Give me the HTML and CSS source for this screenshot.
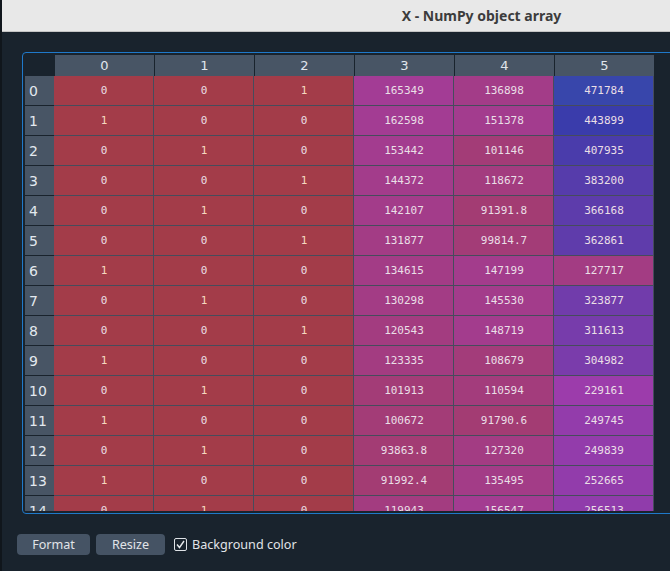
FILE: index.html
```html
<!DOCTYPE html>
<html>
<head>
<meta charset="utf-8">
<title>X - NumPy object array</title>
<link rel="stylesheet" href="styles.css">
</head>
<body>
<div class="desk">
  <div class="edge"></div>
  <div class="window">
    <div class="titlebar"><span class="title">X - NumPy object array</span></div>
    <div class="content">
      <div class="frame">
        <div class="viewport">
          <div class="grid">
            <div class="corner"></div>
            <div class="ch">0</div><div class="ch">1</div><div class="ch">2</div><div class="ch">3</div><div class="ch">4</div><div class="ch">5</div>

            <div class="rh">0</div><div class="c">0</div><div class="c">0</div><div class="c one">1</div><div class="c" style="--v:165349">165349</div><div class="c" style="--v:136898">136898</div><div class="c" style="--v:471784">471784</div>
            <div class="rh">1</div><div class="c one">1</div><div class="c">0</div><div class="c">0</div><div class="c" style="--v:162598">162598</div><div class="c" style="--v:151378">151378</div><div class="c" style="--v:443899">443899</div>
            <div class="rh">2</div><div class="c">0</div><div class="c one">1</div><div class="c">0</div><div class="c" style="--v:153442">153442</div><div class="c" style="--v:101146">101146</div><div class="c" style="--v:407935">407935</div>
            <div class="rh">3</div><div class="c">0</div><div class="c">0</div><div class="c one">1</div><div class="c" style="--v:144372">144372</div><div class="c" style="--v:118672">118672</div><div class="c" style="--v:383200">383200</div>
            <div class="rh">4</div><div class="c">0</div><div class="c one">1</div><div class="c">0</div><div class="c" style="--v:142107">142107</div><div class="c" style="--v:91391.8">91391.8</div><div class="c" style="--v:366168">366168</div>
            <div class="rh">5</div><div class="c">0</div><div class="c">0</div><div class="c one">1</div><div class="c" style="--v:131877">131877</div><div class="c" style="--v:99814.7">99814.7</div><div class="c" style="--v:362861">362861</div>
            <div class="rh">6</div><div class="c one">1</div><div class="c">0</div><div class="c">0</div><div class="c" style="--v:134615">134615</div><div class="c" style="--v:147199">147199</div><div class="c" style="--v:127717">127717</div>
            <div class="rh">7</div><div class="c">0</div><div class="c one">1</div><div class="c">0</div><div class="c" style="--v:130298">130298</div><div class="c" style="--v:145530">145530</div><div class="c" style="--v:323877">323877</div>
            <div class="rh">8</div><div class="c">0</div><div class="c">0</div><div class="c one">1</div><div class="c" style="--v:120543">120543</div><div class="c" style="--v:148719">148719</div><div class="c" style="--v:311613">311613</div>
            <div class="rh">9</div><div class="c one">1</div><div class="c">0</div><div class="c">0</div><div class="c" style="--v:123335">123335</div><div class="c" style="--v:108679">108679</div><div class="c" style="--v:304982">304982</div>
            <div class="rh">10</div><div class="c">0</div><div class="c one">1</div><div class="c">0</div><div class="c" style="--v:101913">101913</div><div class="c" style="--v:110594">110594</div><div class="c" style="--v:229161">229161</div>
            <div class="rh">11</div><div class="c one">1</div><div class="c">0</div><div class="c">0</div><div class="c" style="--v:100672">100672</div><div class="c" style="--v:91790.6">91790.6</div><div class="c" style="--v:249745">249745</div>
            <div class="rh">12</div><div class="c">0</div><div class="c one">1</div><div class="c">0</div><div class="c" style="--v:93863.8">93863.8</div><div class="c" style="--v:127320">127320</div><div class="c" style="--v:249839">249839</div>
            <div class="rh">13</div><div class="c one">1</div><div class="c">0</div><div class="c">0</div><div class="c" style="--v:91992.4">91992.4</div><div class="c" style="--v:135495">135495</div><div class="c" style="--v:252665">252665</div>
            <div class="rh">14</div><div class="c">0</div><div class="c one">1</div><div class="c">0</div><div class="c" style="--v:119943">119943</div><div class="c" style="--v:156547">156547</div><div class="c" style="--v:256513">256513</div>
          </div>
        </div>
      </div>
      <div class="actions">
        <button class="btn btn-format">Format</button>
        <button class="btn btn-resize">Resize</button>
        <label class="check">
          <span class="box"><svg width="11" height="11" viewBox="0 0 11 11"><path d="M2 5.5 L4.5 8.5 L9 2" fill="none" stroke="#e6e9ec" stroke-width="1.4"/></svg></span>
          <span>Background color</span>
        </label>
      </div>
    </div>
  </div>
</div>
</body>
</html>
```
FILE: styles.css
```css
html, body {
  margin: 0;
  padding: 0;
  background: #19232d;
  overflow: hidden;
  width: 670px;
  height: 571px;
}
.desk {
  display: flex;
  height: 571px;
}
.edge {
  flex: 0 0 2px;
  background: #10161c;
}
.window {
  flex: 0 0 959px;
  display: flex;
  flex-direction: column;
  background: #19232d;
}
.titlebar {
  height: 31px;
  background: #e8e8e8;
  border-bottom: 1px solid #c4c4c4;
  display: flex;
  align-items: center;
  justify-content: center;
}
.title {
  font-family: "Noto Sans", "DejaVu Sans", sans-serif;
  font-weight: 700;
  font-size: 14px;
  color: #3c3c3c;
}
.content {
  padding: 20px 0 0 15px;
}
.frame {
  margin-left: 5px;
  border: 1px solid #1f79ca;
  border-radius: 4px;
  padding: 2px;
}
.viewport {
  height: 456px;
  overflow: hidden;
}
.grid {
  display: grid;
  grid-template-columns: 29px repeat(6, 100px);
  grid-template-rows: 21px;
  grid-auto-rows: 30px;
}
.grid > div {
  box-sizing: border-box;
}
.corner {
  background: #19232d;
}
.ch {
  background: #485565;
  border-left: 1px solid #19232d;
  color: #e0e6ec;
  font-family: "DejaVu Sans", sans-serif;
  font-size: 13px;
  display: flex;
  align-items: center;
  justify-content: center;
}
.rh {
  background: #485565;
  border-bottom: 1px solid #19232d;
  color: #e3e9ef;
  font-family: "DejaVu Sans", sans-serif;
  font-size: 14px;
  display: flex;
  align-items: center;
  padding-left: 4px;
}
.c {
  --v: 0;
  background-color: hsl(calc(355deg - 121deg * var(--v) / 471784) 100% 65% / 0.6);
  border-right: 1px solid #464c5c;
  border-bottom: 1px solid #464c5c;
  color: #eadfe6;
  font-family: "DejaVu Sans Mono", monospace;
  font-size: 11px;
  display: flex;
  align-items: center;
  justify-content: center;
  padding-left: 1px;
}
.c.one {
  color: #f6d8bf;
}
.actions {
  margin-top: 20px;
  display: flex;
  align-items: center;
  font-family: "Noto Sans", "DejaVu Sans", sans-serif;
  font-size: 12.6px;
  color: #e1e4e8;
}
.btn {
  height: 21px;
  background: #455364;
  border: none;
  border-radius: 4px;
  color: #e1e4e8;
  font: inherit;
  padding: 0;
}
.btn-format {
  width: 73px;
}
.btn-resize {
  width: 69px;
  margin-left: 6px;
}
.check {
  display: flex;
  align-items: center;
  margin-left: 9px;
}
.box {
  width: 11px;
  height: 11px;
  border: 1px solid #dfe3e7;
  border-radius: 2px;
  display: flex;
  align-items: center;
  justify-content: center;
  margin-right: 5px;
}
```
